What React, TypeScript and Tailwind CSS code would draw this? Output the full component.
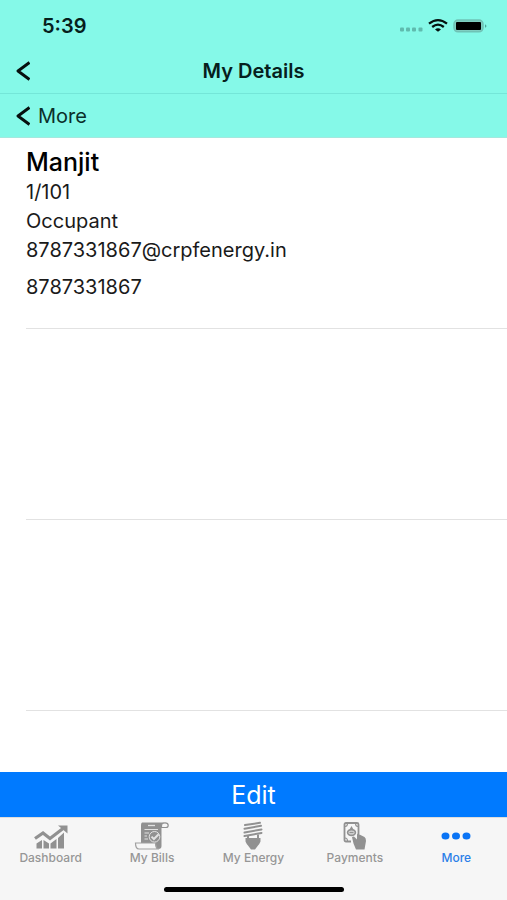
import type { ReactNode } from "react";

type Tab = { label: string; icon: ReactNode; active?: boolean };

function BackIcon() {
  return (
    <svg width="14" height="20" viewBox="0 0 14 20" fill="none" stroke="#06100e" strokeWidth="2.900" aria-hidden="true">
      <path d="M13.500 1.500 2 10 13.500 18.500" strokeLinejoin="round" />
    </svg>
  );
}

function StatusIcons() {
  return (
    <svg width="88" height="16" viewBox="0 0 88 16" aria-hidden="true">
      <g fill="#0b2f2a" opacity=".3">
        <rect x="1" y="9.500" width="4" height="4" rx="1" />
        <rect x="7" y="9.500" width="4" height="4" rx="1" />
        <rect x="13" y="9.500" width="4" height="4" rx="1" />
        <rect x="19.500" y="9.500" width="4" height="4" rx="1" />
      </g>
      <g fill="none" stroke="#04110f" strokeWidth="2.300">
        <path d="M30 5.700Q39 -1.500 48 5.700" />
        <path d="M33.200 9Q39 4.300 44.800 9" />
      </g>
      <path d="M36 11.400Q39 9.200 42 11.400L39 13.800Z" fill="#04110f" />
      <rect x="55" y="2" width="29" height="11.800" rx="4" fill="#7fcfc2" stroke="#6fc3b6" strokeWidth="1.500" />
      <rect x="57" y="4" width="25" height="8" rx="1" fill="#000" />
      <path d="M86 6.200Q89 8 86 9.800Z" fill="#4fa598" />
    </svg>
  );
}

function DashboardIcon() {
  return (
    <svg width="36" height="28" viewBox="0 0 36 28" fill="#919191" aria-hidden="true">
      <path d="M3.500 21.500 9 18V26.500H3.500ZM10.500 18 16 21.500V26.500H10.500ZM17.500 21.500 23.500 17V26.500H17.500ZM25 16 31 10.500V26.500H25Z" />
      <path d="M2 16.500 10 11 17 16.500 30 6.500" fill="none" stroke="#919191" strokeWidth="3.200" />
      <path d="M25 3.500H34.500V11.500Z" />
    </svg>
  );
}

function BillsIcon() {
  return (
    <svg width="36" height="30" viewBox="0 0 36 30" aria-hidden="true">
      <path d="M8 1.500H30Q27.500 2.500 27.500 6V25Q27.500 28 24.500 28Q22 28 22 23.500H7V4Q7 2 8 1.500Z" fill="#919191" />
      <path d="M27.500 6.500V5Q27.500 1.800 31 1.800Q34.200 1.800 34.200 4.200Q34.200 6.500 32 6.500Z" fill="#f6f6f6" stroke="#919191" strokeWidth="1.200" />
      <path d="M1.500 22H21.500Q21.500 28 25 28H5Q1.500 28 1.500 22Z" fill="#f6f6f6" stroke="#a0a0a0" strokeWidth="1.200" />
      <g fill="none" stroke="#e2e2e2" strokeWidth="1">
        <path d="M14 4.500H21" strokeWidth="1.300" />
        <path d="M10.500 8.500H24M10.500 12H15M10.500 15H13M10.500 18H14" />
        <circle cx="20.500" cy="15.800" r="5.300" />
        <path d="m17.500 15.600 2.400 2.400 4.800-4.800" strokeWidth="2" />
      </g>
    </svg>
  );
}

function EnergyIcon() {
  return (
    <svg width="24" height="30" viewBox="0 0 24 30" fill="#919191" aria-hidden="true">
      <path d="M4 4 19 1.800M3.500 7.800 20 4.800M3.500 11.500 20.500 8.500M3.500 15 20.500 12" fill="none" stroke="#919191" strokeWidth="2" strokeLinecap="round" />
      <path d="M7 14V18M17 13.500V18" stroke="#919191" strokeWidth="2" />
      <path d="M4.500 17H19.500V20.500Q18.500 23 17 24.500L14 28.500H10L7 24.500Q5.500 23 4.500 20.500Z" />
    </svg>
  );
}

function PaymentsIcon() {
  return (
    <svg width="26" height="30" viewBox="0 0 26 30" aria-hidden="true">
      <path d="M9 20.500H4Q2.500 20.500 2.500 19V3.500Q2.500 2 4 2H15Q16.500 2 16.500 3.500V13" fill="none" stroke="#919191" strokeWidth="1.800" />
      <path d="M3 5.500Q5.500 5.500 5.500 2.500M13.500 2.500Q13.500 5.500 16 5.500M3 17Q5.500 17 5.500 20" fill="none" stroke="#919191" strokeWidth="1.100" />
      <path d="M9.500 5 11.200 8H7.800Z" fill="#919191" />
      <ellipse cx="9.500" cy="11.500" rx="3.900" ry="2.900" fill="#d5d5d5" stroke="#919191" strokeWidth="1.600" />
      <path d="M7.500 11.500H11.500" stroke="#919191" strokeWidth="1.200" />
      <path d="M10 16.200Q11.500 14.500 13 16.500L15 18.500V13.500Q16 11.500 17.500 13.500L22.500 16Q24 17 24 20L22.500 28.500H14L11.500 22.500Z" fill="#919191" />
    </svg>
  );
}

function MoreIcon() {
  return (
    <svg width="30" height="28" viewBox="0 0 30 28" fill="#0a74f5" aria-hidden="true">
      <ellipse cx="4.500" cy="14" rx="4" ry="3.500" />
      <ellipse cx="15" cy="14" rx="4" ry="3.500" />
      <ellipse cx="25.500" cy="14" rx="4" ry="3.500" />
    </svg>
  );
}

const tabs: Tab[] = [
  { label: "Dashboard", icon: <DashboardIcon /> },
  { label: "My Bills", icon: <BillsIcon /> },
  { label: "My Energy", icon: <EnergyIcon /> },
  { label: "Payments", icon: <PaymentsIcon /> },
  { label: "More", icon: <MoreIcon />, active: true },
];

export default function App() {
  return (
    <div className="flex min-h-screen flex-col bg-white font-['Inter','Liberation_Sans',sans-serif] text-[#1a1a1a]">
      <header className="bg-[#85f9e8]">
        <div className="flex h-12 items-center justify-between pt-1 pr-5 pl-[42px]">
          <span className="text-xl leading-6 font-semibold text-[#06201c]">5:39</span>
          <StatusIcons />
        </div>
        <div className="grid h-[46px] grid-cols-[1fr_auto_1fr] items-center border-b border-[#74e6d8] px-4">
          <button type="button" aria-label="Back" className="justify-self-start">
            <BackIcon />
          </button>
          <h1 className="text-xl leading-6 font-semibold text-[#06201c]">My Details</h1>
        </div>
        <button type="button" className="flex h-11 w-full items-center gap-2 border-b border-[#a5e8de] px-4 text-xl leading-6 text-[#0b2f2a]">
          <BackIcon />
          <span>More</span>
        </button>
      </header>

      <main className="flex-1 pl-[26px]">
        <section className="h-[191px] border-b border-[#e2e2e2] pt-2">
          <h2 className="text-[25px] leading-8 font-medium text-black">Manjit</h2>
          <p className="text-xl leading-[29px]">1/101</p>
          <p className="text-xl leading-[29px]">Occupant</p>
          <p className="text-xl leading-[29px]">8787331867@crpfenergy.in</p>
          <p className="mt-2 text-xl leading-[29px]">8787331867</p>
        </section>
        <div className="h-[191px] border-b border-[#e2e2e2]" />
        <div className="h-[191px] border-b border-[#e2e2e2]" />
      </main>

      <button type="button" className="h-[45px] w-full bg-[#007aff] text-[25px] leading-8 text-white">
        Edit
      </button>

      <footer className="border-t border-[#dddddd] bg-[#f6f6f6]">
        <nav className="grid grid-cols-5 pt-1">
          {tabs.map((tab) => (
            <a
              key={tab.label}
              href="#"
              aria-current={tab.active ? "page" : undefined}
              className={`flex flex-col items-center text-xs leading-4 font-medium ${tab.active ? "text-[#2b7fe8]" : "text-[#969696]"}`}
            >
              <span className="flex h-7 items-center">{tab.icon}</span>
              {tab.label}
            </a>
          ))}
        </nav>
        <div className="flex h-[34px] items-end justify-center pb-2">
          <div className="h-[5px] w-[180px] rounded-full bg-black" />
        </div>
      </footer>
    </div>
  );
}
